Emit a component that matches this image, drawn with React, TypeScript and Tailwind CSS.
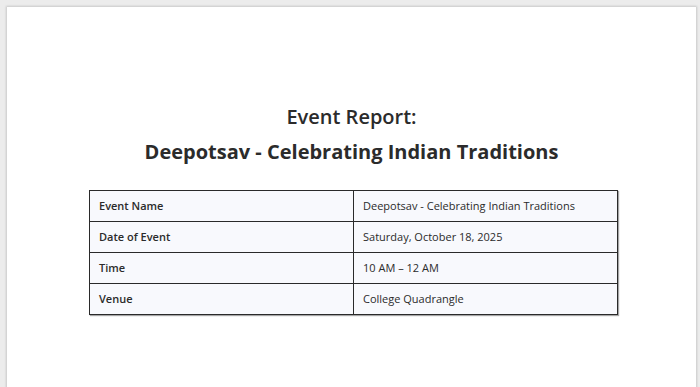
const rows = [
  { label: "Event Name", value: "Deepotsav - Celebrating Indian Traditions" },
  { label: "Date of Event", value: "Saturday, October 18, 2025" },
  { label: "Time", value: "10 AM – 12 AM" },
  { label: "Venue", value: "College Quadrangle" },
];

export default function App() {
  return (
    <div className="h-[387px] overflow-hidden bg-[#ececec] pl-[7px] pt-[7px] font-['Open_Sans',sans-serif]">
      <div className="h-[400px] w-[689px] bg-white pt-[95px] shadow-[0_0_2px_1px_rgba(0,0,0,0.15)]">
        <h1 className="text-center text-[20px] font-semibold leading-[30px] text-[#2b2b2b]">
          Event Report:
        </h1>
        <h2 className="mt-[5px] text-center text-[20px] font-bold leading-[30px] text-[#2b2b2b]">
          Deepotsav - Celebrating Indian Traditions
        </h2>
        <table className="ml-[82px] mt-[23px] w-[529px] border-collapse border-[1.5px] border-[#2a2a2a] shadow-[1px_1px_1px_rgba(0,0,0,0.35)]">
          <tbody>
            {rows.map((r) => (
              <tr key={r.label} className="h-[31px] bg-[#f8f9fd]">
                <td className="w-[264px] border-[1.5px] border-[#2a2a2a] pl-[9px] text-[11px] font-semibold text-[#2b2b2b]">
                  {r.label}
                </td>
                <td className="border-[1.5px] border-[#2a2a2a] pl-[9px] text-[11px] text-[#2b2b2b]">
                  {r.value}
                </td>
              </tr>
            ))}
          </tbody>
        </table>
      </div>
    </div>
  );
}
